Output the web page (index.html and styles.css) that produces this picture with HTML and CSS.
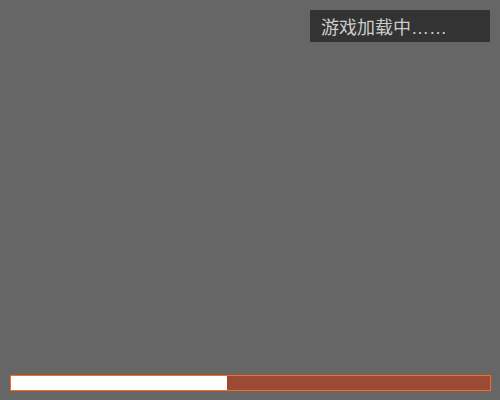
FILE: index.html
```html
<!DOCTYPE html>
<html lang="zh">
<head>
<meta charset="utf-8">
<title>游戏加载中</title>
<link rel="stylesheet" href="styles.css">
</head>
<body>
<div class="stage">
  <div class="top">
    <div class="status">游戏加载中……</div>
  </div>
  <div class="progress">
    <div class="progress-fill" style="width: 45%"></div>
  </div>
</div>
</body>
</html>
```
FILE: styles.css
```css
html, body {
  margin: 0;
  padding: 0;
  background: #666666;
}

.stage {
  height: 400px;
  display: flex;
  flex-direction: column;
  padding: 10px 9px 9px 10px;
  box-sizing: border-box;
}

.top {
  display: flex;
  justify-content: flex-end;
  padding-right: 1px;
}

.status {
  width: 180px;
  height: 32px;
  box-sizing: border-box;
  padding: 4px 0 0 11px;
  background: #333333;
  color: #cccccc;
  font-family: "Liberation Sans", "Noto Sans CJK SC", sans-serif;
  font-size: 18px;
  line-height: 28px;
  white-space: nowrap;
}

.progress {
  margin-top: auto;
  height: 16px;
  border: 1px solid #ff6a14;
  box-sizing: border-box;
  background: #9b4a36;
  display: flex;
}

.progress-fill {
  background: #ffffff;
  height: 100%;
}
```
